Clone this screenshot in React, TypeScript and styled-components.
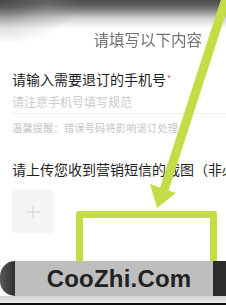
import React from 'react';
import styled, { createGlobalStyle } from 'styled-components';

const GlobalStyle = createGlobalStyle`
  html, body {
    margin: 0;
    padding: 0;
    background: #fff;
  }
  body {
    font-family: "Noto Sans CJK SC", "Noto Sans", sans-serif;
  }
`;

const Screen = styled.div`
  position: relative;
  width: 226px;
  height: 305px;
  overflow: hidden;
  background: #fff;
`;

// top shadow of the phone photo
const TopShade = styled.div`
  position: absolute;
  top: 0;
  left: 0;
  right: 0;
  height: 44px;
  background:
    radial-gradient(ellipse 80px 44px at 0 0, rgba(70, 70, 70, 0.7) 0%, rgba(140, 140, 140, 0.3) 60%, rgba(255, 255, 255, 0) 100%),
    linear-gradient(#4c4c4c 0px, #5e5e5e 5px, #8c8c8c 11px, #cfcfcf 18px, rgba(255, 255, 255, 0) 28px);
  pointer-events: none;
`;

const Form = styled.div`
  display: flex;
  flex-direction: column;
  padding: 29px 0 0 12px;
`;

const Title = styled.div`
  align-self: flex-end;
  margin-right: 24px;
  font-size: 15.5px;
  line-height: 20px;
  color: #737373;
  filter: blur(0.5px);
  white-space: nowrap;
`;

const Label = styled.div<{ $top: number }>`
  margin-top: ${(p) => p.$top}px;
  font-size: 14px;
  line-height: 20px;
  color: #1e1e1e;
  white-space: nowrap;
`;

const Required = styled.span`
  color: #e25555;
  font-size: 9px;
  vertical-align: 3px;
  margin-left: 1px;
`;

const Placeholder = styled.div`
  margin-top: 5px;
  padding-bottom: 3px;
  border-bottom: 1px solid #f0f0f0;
  font-size: 12px;
  line-height: 16px;
  color: #cbcbcb;
  white-space: nowrap;
`;

const Hint = styled.div`
  margin-top: 7px;
  font-size: 10.2px;
  letter-spacing: 0.2px;
  line-height: 14px;
  color: #c6c6c6;
  white-space: nowrap;
`;

const UploadBox = styled.div`
  margin-top: 11px;
  width: 42px;
  height: 43px;
  border-radius: 4px;
  background: #f5f5f5;
  display: flex;
  align-items: center;
  justify-content: center;
`;

// overlays from the annotated screenshot
const Frame = styled.div`
  position: absolute;
  left: 76px;
  top: 211px;
  width: 141px;
  height: 92px;
  box-sizing: border-box;
  border: 7px solid #c4dd47;
  border-radius: 3px;
`;

const ArrowLayer = styled.svg`
  position: absolute;
  left: 0;
  top: 0;
  pointer-events: none;
`;

const Footer = styled.div`
  position: absolute;
  left: 0;
  right: 0;
  bottom: 0;
  display: flex;
  flex-direction: column;
`;

const Bar = styled.div`
  display: flex;
  height: 35px;
`;

const BarCap = styled.div`
  width: 15px;
  border-radius: 17px 0 0 17px;
  background: linear-gradient(90deg, #5a5a5a, #2e2e2e);
`;

const BarBody = styled.div`
  flex: 1;
  display: flex;
  align-items: center;
  justify-content: center;
  padding-left: 10px;
  background: #bebebe;
  font-family: "Liberation Sans", Arial, sans-serif;
  font-weight: 700;
  font-size: 24px;
  color: #222;
  letter-spacing: 0.2px;
`;

const BarEnd = styled.div`
  width: 13px;
  background: #2c2c2c;
`;

const Strip = styled.div`
  height: 7px;
  background: linear-gradient(#d2d2d2, #ececec);
`;

const Edge = styled.div`
  height: 2px;
  background: #111;
`;

const Plus = () => (
  <svg width="14" height="14" viewBox="0 0 14 14">
    <path d="M7 0v14M0 7h14" stroke="#cfcfcf" strokeWidth="1" />
  </svg>
);

export default function App() {
  return (
    <Screen>
      <GlobalStyle />
      <Form>
        <Title>请填写以下内容</Title>
        <Label $top={20}>
          请输入需要退订的手机号<Required>*</Required>
        </Label>
        <Placeholder>请注意手机号填写规范</Placeholder>
        <Hint>温馨提醒：错误号码将影响退订处理</Hint>
        <Label $top={24}>请上传您收到营销短信的截图（非必填）</Label>
        <UploadBox>
          <Plus />
        </UploadBox>
      </Form>
      <TopShade />
      <Frame />
      <Footer>
        <Bar>
          <BarCap />
          <BarBody>CooZhi.Com</BarBody>
          <BarEnd />
        </Bar>
        <Strip />
        <Edge />
      </Footer>
      <ArrowLayer width="226" height="305" viewBox="0 0 226 305">
        <line x1="232" y1="-20" x2="164" y2="190" stroke="#c4dd47" strokeWidth="9" />
        <polygon points="150,184 176,193 157,208" fill="#c4dd47" />
      </ArrowLayer>
    </Screen>
  );
}
